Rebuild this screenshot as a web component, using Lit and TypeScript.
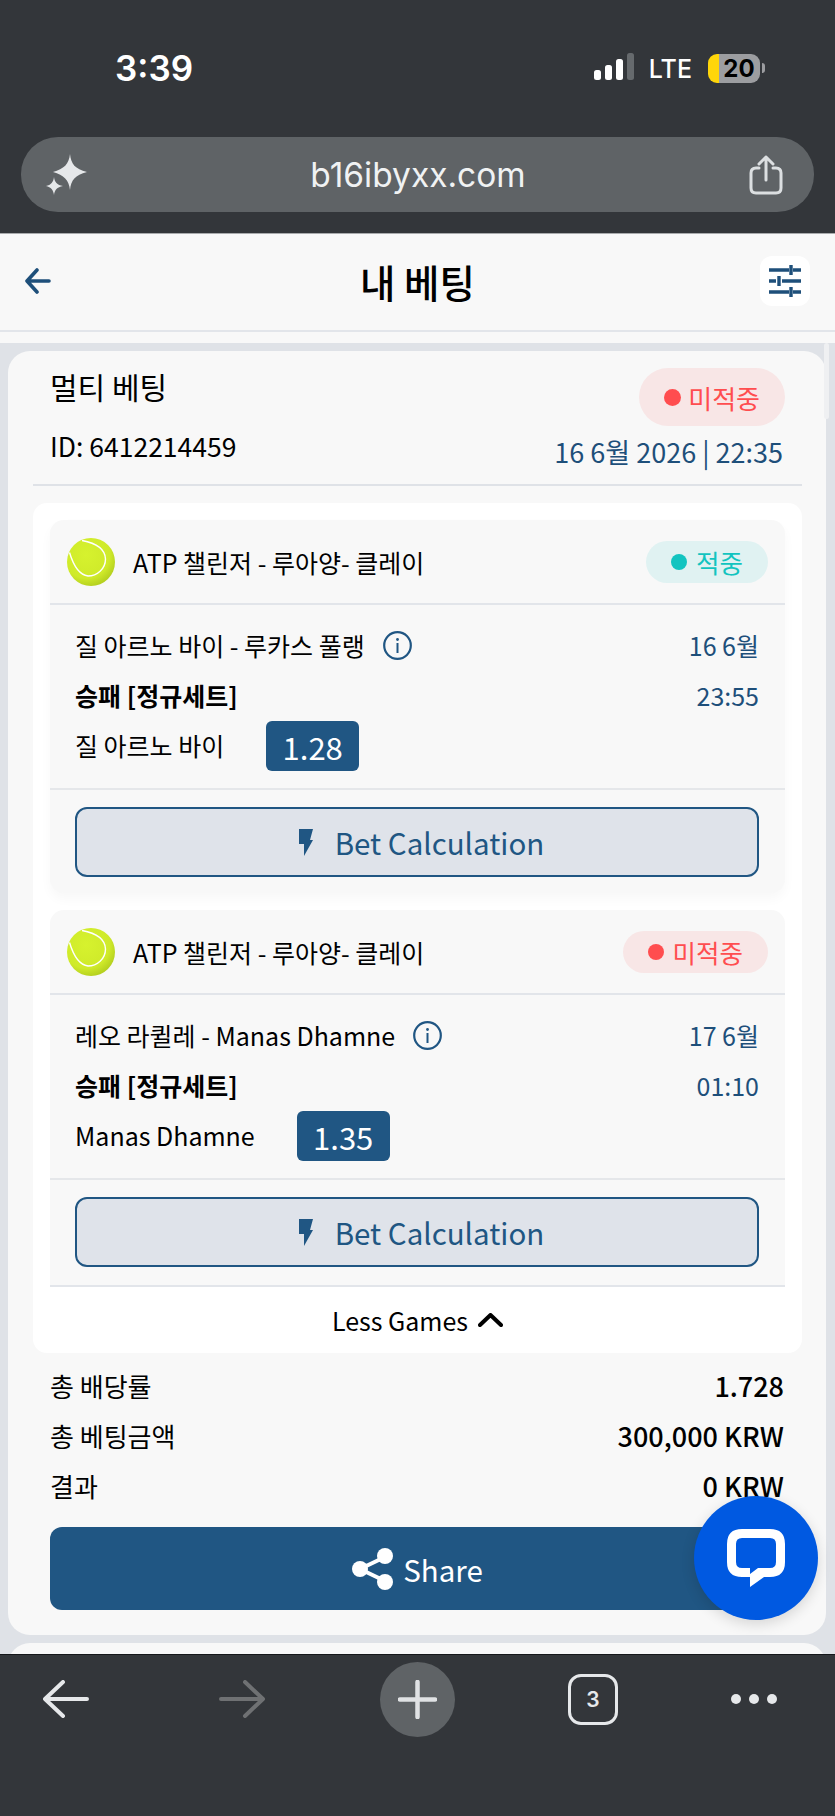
import {css, html, LitElement, svg} from "lit";
import {customElement} from "lit/decorators.js";

interface Game {
  status: string;
  won: boolean;
  match: string;
  date: string;
  time: string;
  pick: string;
  odds: string;
}

const GAMES: Game[] = [
  {
    status: "적중",
    won: true,
    match: "질 아르노 바이 - 루카스 풀랭",
    date: "16 6월",
    time: "23:55",
    pick: "질 아르노 바이",
    odds: "1.28",
  },
  {
    status: "미적중",
    won: false,
    match: "레오 라퀼레 - Manas Dhamne",
    date: "17 6월",
    time: "01:10",
    pick: "Manas Dhamne",
    odds: "1.35",
  },
];

const SUMMARY = [
  {label: "총 배당률", value: "1.728"},
  {label: "총 베팅금액", value: "300,000 KRW"},
  {label: "결과", value: "0 KRW"},
];

const tennisBall = html`
  <svg class="ball" viewBox="0 0 48 48">
    <defs>
      <radialGradient id="ballFill" cx="0.4" cy="0.35" r="0.75">
        <stop offset="0" stop-color="#d6f22e"></stop>
        <stop offset="0.65" stop-color="#cfea2a"></stop>
        <stop offset="1" stop-color="#a9c41a"></stop>
      </radialGradient>
    </defs>
    <circle cx="24" cy="24" r="24" fill="url(#ballFill)"></circle>
    ${svg`<path d="M15 2.5C23 4 38 8 38.5 21C38.5 31 30 38 21 38C12 37 6 26 2.5 14.5" fill="none" stroke="#fff" stroke-width="1.4"></path>`}
  </svg>
`;

@customElement("app-root")
export class AppRoot extends LitElement {
  static styles = css`
    :host {
      display: flex;
      flex-direction: column;
      position: relative;
      width: 835px;
      height: 1816px;
      overflow: hidden;
      font-family: "Noto Sans CJK KR", "Noto Sans", sans-serif;
      color: #000;
      background: #33363a;
    }

    /* browser chrome, top */
    .top {
      flex: none;
      height: 233px;
      background: #33363a;
      color: #fff;
      box-sizing: border-box;
      padding: 47px 21px 0;
    }

    .status {
      display: flex;
      align-items: center;
      height: 42px;
      margin-bottom: 48px;
      font-family: Inter, sans-serif;
    }

    .status svg {
      margin-bottom: 3px;
    }

    .clock {
      margin-left: 94px;
      font-size: 35px;
      font-weight: 600;
      line-height: 42px;
      flex: 1;
    }

    .lte {
      margin: 2px 16px 0 14px;
      font-size: 25px;
      font-weight: 500;
      line-height: 42px;
    }

    .battery {
      display: flex;
      align-items: center;
      justify-content: center;
      width: 52px;
      height: 29px;
      padding-left: 10px;
      box-sizing: border-box;
      border-radius: 9px;
      background: linear-gradient(90deg, #ffd60a 11px, #9c9da0 11px);
      color: #000;
      font-size: 24px;
      font-weight: 700;
    }

    .nub {
      width: 3px;
      height: 10px;
      margin: 0 49px 0 2px;
      border-radius: 0 3px 3px 0;
      background: #9c9da0;
    }

    .url {
      display: flex;
      align-items: center;
      justify-content: space-between;
      height: 75px;
      padding: 0 31px 0 25px;
      border-radius: 37px;
      background: #5f6366;
      font-family: Inter, sans-serif;
      font-size: 33.5px;
      color: #f0f2f3;
    }

    /* page header */
    .header {
      flex: none;
      display: grid;
      grid-template-columns: 1fr auto 1fr;
      align-items: center;
      height: 99px;
      padding: 0 25px 2px;
      background: #f8f8f8;
      border-top: 1px solid #a9abad;
      border-bottom: 2px solid #e2e5ea;
      box-sizing: border-box;
    }

    .title {
      font-size: 38.5px;
      font-weight: 500;
      line-height: 50px;
    }

    .filter {
      justify-self: end;
      display: flex;
      align-items: center;
      justify-content: center;
      width: 50px;
      height: 50px;
      border-radius: 12px;
      background: #fff;
    }

    .strip {
      flex: none;
      height: 11px;
      background: #f8f8f8;
    }

    /* scrolling page */
    .main {
      flex: 1;
      min-height: 0;
      overflow: hidden;
      display: flex;
      flex-direction: column;
      gap: 8px;
      padding: 8px 9px 0 8px;
      background: #dfe2e7;
    }

    .card {
      flex: none;
      padding: 17px 24px 25px 25px;
      border-radius: 22px;
      background: #f8f8f8;
    }

    .head {
      height: 116px;
      margin-bottom: 17px;
      padding: 0 19px 0 17px;
      border-bottom: 2px solid #dfe2e7;
    }

    .head-row {
      display: flex;
      justify-content: space-between;
      align-items: flex-start;
    }

    .bet-type {
      font-size: 30px;
      line-height: 36px;
    }

    .bet-id {
      font-size: 26.5px;
      line-height: 40px;
    }

    .bet-date {
      margin-top: 6px;
      font-size: 27px;
      line-height: 40px;
      color: #1e4f7a;
    }

    .badge {
      display: inline-flex;
      align-items: center;
      box-sizing: border-box;
    }

    .badge.lost {
      background: #f8e6e6;
      color: #ff4d4f;
    }

    .badge.won {
      background: #e0f2f2;
      color: #12c4c0;
    }

    .badge .dot {
      border-radius: 50%;
      background: currentColor;
    }

    .badge.big {
      height: 58px;
      margin-right: -2px;
      padding: 0 25px;
      gap: 7px;
      border-radius: 29px;
      font-size: 26px;
    }

    .badge.big .dot {
      width: 17px;
      height: 17px;
    }

    .badge.small {
      height: 42px;
      padding: 0 25px;
      gap: 9px;
      border-radius: 21px;
      font-size: 25.5px;
    }

    .badge.small .dot {
      width: 16px;
      height: 16px;
    }

    .panel {
      padding: 17px 17px 0;
      border-radius: 14px;
      background: #fff;
    }

    .games {
      display: flex;
      flex-direction: column;
      gap: 17px;
    }

    .game {
      border-radius: 14px;
      background: #f8f8f8;
      box-shadow: 0 6px 12px rgba(0, 0, 0, 0.03);
    }

    /* second game runs into the Less Games rule */
    .game:last-child {
      border-radius: 14px 14px 0 0;
      box-shadow: none;
    }

    .game:last-child .calc-wrap {
      padding-bottom: 18px;
    }

    .game-head {
      display: flex;
      align-items: center;
      gap: 18px;
      height: 83px;
      padding: 0 17px;
      border-bottom: 2px solid #e2e5ea;
    }

    .ball {
      flex: none;
      width: 48px;
      height: 48px;
    }

    .league {
      flex: 1;
      font-size: 25px;
    }

    .game-body {
      padding: 16px 26px 17px 25px;
      border-bottom: 2px solid #e5e7ea;
    }

    .line {
      display: flex;
      align-items: center;
      justify-content: space-between;
      height: 50px;
      font-size: 25px;
    }

    .line-text {
      margin-bottom: 2px;
    }

    .with-icon {
      display: flex;
      align-items: center;
      gap: 18px;
    }

    .market {
      font-weight: 700;
    }

    .when {
      color: #1e4f7a;
    }

    .pick {
      display: flex;
      align-items: center;
      gap: 42px;
    }

    .odds {
      display: flex;
      align-items: center;
      justify-content: center;
      width: 93px;
      height: 50px;
      border-radius: 6px;
      background: #205683;
      color: #fff;
      font-size: 31px;
      font-weight: 400;
    }

    .calc-wrap {
      padding: 17px 26px 16px 25px;
    }

    .calc {
      display: flex;
      align-items: center;
      justify-content: center;
      gap: 22px;
      height: 70px;
      padding-left: 8px;
      box-sizing: border-box;
      border: 2px solid #205683;
      border-radius: 12px;
      background: #dfe3ea;
      color: #205683;
      font-size: 29.5px;
    }

    .less {
      display: flex;
      align-items: center;
      justify-content: center;
      gap: 10px;
      height: 66px;
      border-top: 2px solid #e2e5ea;
      font-size: 25px;
    }

    .summary {
      margin-top: 7px;
      padding: 0 18px 0 17px;
    }

    .sum-row {
      display: flex;
      align-items: center;
      justify-content: space-between;
      height: 50px;
      font-size: 26px;
    }

    .sum-row .value {
      font-size: 27px;
      font-weight: 500;
    }

    .share {
      display: flex;
      align-items: center;
      justify-content: center;
      gap: 9px;
      height: 83px;
      margin: 17px 17px 0;
      border-radius: 12px;
      background: #205683;
      color: #fff;
      font-size: 29.5px;
    }

    .peek {
      height: 40px;
      flex: none;
      border-radius: 22px 22px 0 0;
      background: #f8f8f8;
    }

    /* browser chrome, bottom */
    .bottom {
      flex: none;
      display: flex;
      align-items: center;
      gap: 113px;
      height: 162px;
      box-sizing: border-box;
      padding: 7px 0 80px 43px;
      border-top: 1px solid #15171a;
      background: #33363a;
    }

    .bottom .back {
      margin-right: 17px;
    }

    .bottom .forward {
      margin-right: 2px;
    }

    .plus {
      display: flex;
      align-items: center;
      justify-content: center;
      width: 75px;
      height: 75px;
      border-radius: 50%;
      background: #5f6366;
    }

    .tabs {
      display: flex;
      align-items: center;
      justify-content: center;
      width: 50px;
      height: 51px;
      box-sizing: border-box;
      border: 3px solid #e6e8ea;
      border-radius: 13px;
      color: #e6e8ea;
      font-family: Inter, sans-serif;
      font-size: 21px;
      font-weight: 600;
    }

    .more {
      display: flex;
      gap: 8px;
    }

    .more span {
      width: 10px;
      height: 10px;
      border-radius: 50%;
      background: #e6e8ea;
    }

    /* overlays */
    .scrollbar {
      position: absolute;
      left: 824px;
      top: 343px;
      width: 5px;
      height: 76px;
      border-radius: 3px;
      background: #eff0f2;
    }

    .chat {
      position: absolute;
      left: 694px;
      top: 1496px;
      display: flex;
      align-items: center;
      justify-content: center;
      width: 124px;
      height: 124px;
      border-radius: 50%;
      background: #0059e1;
      box-shadow: 0 4px 14px rgba(0, 0, 0, 0.14);
    }
  `;

  private renderStatus() {
    return html`
      <div class="status">
        <div class="clock">3:39</div>
        <svg width="41" height="27" viewBox="0 0 41 27">
          <rect x="0" y="17" width="7" height="10" rx="2.5" fill="#fff"></rect>
          <rect x="11" y="12" width="7" height="15" rx="2.5" fill="#fff"></rect>
          <rect x="22" y="6" width="7" height="21" rx="2.5" fill="#fff"></rect>
          <rect x="33" y="0" width="7" height="27" rx="2.5" fill="#666a6d"></rect>
        </svg>
        <div class="lte">LTE</div>
        <div class="battery">20</div>
        <div class="nub"></div>
      </div>
    `;
  }

  private renderUrl() {
    return html`
      <div class="url">
        <svg width="41" height="41" viewBox="0 0 41 41" fill="#e6e8ea">
          <path d="M24 0C25 10 29 15 41 18C29 21 25 26 24 36C23 26 18 21 7 18C18 15 23 10 24 0Z"></path>
          <path d="M8 23C8.600 28 11 31 17 32C11 33 8.600 36 8 41C7.400 36 5 33 0 32C5 31 7.400 28 8 23Z"></path>
        </svg>
        <span>b16ibyxx.com</span>
        <svg width="34" height="40" viewBox="0 0 34 40" fill="none" stroke="#dcdfe1" stroke-width="3" stroke-linecap="round" stroke-linejoin="round">
          <path d="M10 13H7Q2 13 2 18V33Q2 38 7 38H27Q32 38 32 33V18Q32 13 27 13H24"></path>
          <path d="M17 25V2M10 9L17 2L24 9"></path>
        </svg>
      </div>
    `;
  }

  private renderHeader() {
    return html`
      <div class="header">
        <svg width="26" height="26" viewBox="0 0 26 26" fill="none" stroke="#1e4f7a" stroke-width="3.600" stroke-linecap="round" stroke-linejoin="round">
          <path d="M24 13H3M12 2L2 13L12 24"></path>
        </svg>
        <div class="title">내 베팅</div>
        <div class="filter">
          <svg width="32" height="32" viewBox="0 0 32 32" fill="none" stroke="#1e4f7a" stroke-width="3.400">
            <path d="M0 5H20M24 5H32M22 0V10"></path>
            <path d="M0 16H7M13 16H32M10 11V21"></path>
            <path d="M0 27H20M24 27H32M22 22V32"></path>
          </svg>
        </div>
      </div>
    `;
  }

  private renderGame(game: Game) {
    return html`
      <div class="game">
        <div class="game-head">
          ${tennisBall}
          <div class="league">ATP 챌린저 - 루아양- 클레이</div>
          <div class="badge small ${game.won ? "won" : "lost"}">
            <span class="dot"></span>${game.status}
          </div>
        </div>
        <div class="game-body">
          <div class="line">
            <div class="with-icon line-text">
              ${game.match}
              <svg width="29" height="29" viewBox="0 0 29 29">
                <circle cx="14.500" cy="14.500" r="13.300" fill="none" stroke="#205683" stroke-width="2.200"></circle>
                <rect x="13.500" y="12" width="2" height="10" fill="#205683"></rect>
                <circle cx="14.500" cy="8.500" r="1.400" fill="#205683"></circle>
              </svg>
            </div>
            <div class="when line-text">${game.date}</div>
          </div>
          <div class="line">
            <div class="market line-text">승패 [정규세트]</div>
            <div class="when line-text">${game.time}</div>
          </div>
          <div class="line">
            <div class="pick">
              <span class="line-text">${game.pick}</span>
              <div class="odds">${game.odds}</div>
            </div>
          </div>
        </div>
        <div class="calc-wrap">
          <div class="calc">
            <svg width="15" height="27" viewBox="0 0 15 27" fill="#205683">
              <path d="M1 0H15L12 11H15L6 27V15H1Z"></path>
            </svg>
            Bet Calculation
          </div>
        </div>
      </div>
    `;
  }

  private renderBottom() {
    return html`
      <div class="bottom">
        <svg class="back" width="46" height="38" viewBox="0 0 46 38" fill="none" stroke="#e6e8ea" stroke-width="4" stroke-linecap="round" stroke-linejoin="round">
          <path d="M44 19H3M20 2L2 19L20 36"></path>
        </svg>
        <svg class="forward" width="46" height="38" viewBox="0 0 46 38" fill="none" stroke="#6f7173" stroke-width="4" stroke-linecap="round" stroke-linejoin="round">
          <path d="M2 19H43M26 2L44 19L26 36"></path>
        </svg>
        <div class="plus">
          <svg width="39" height="39" viewBox="0 0 39 39" stroke="#e0e2e4" stroke-width="4.500" stroke-linecap="round">
            <path d="M19.500 2V37M2 19.500H37"></path>
          </svg>
        </div>
        <div class="tabs">3</div>
        <div class="more"><span></span><span></span><span></span></div>
      </div>
    `;
  }

  render() {
    return html`
      <div class="top">${this.renderStatus()} ${this.renderUrl()}</div>
      ${this.renderHeader()}
      <div class="strip"></div>
      <div class="main">
        <div class="card">
          <div class="head">
            <div class="head-row">
              <div class="bet-type">멀티 베팅</div>
              <div class="badge big lost"><span class="dot"></span>미적중</div>
            </div>
            <div class="head-row">
              <div class="bet-id">ID: 6412214459</div>
              <div class="bet-date">16 6월 2026 | 22:35</div>
            </div>
          </div>
          <div class="panel">
            <div class="games">${GAMES.map((g) => this.renderGame(g))}</div>
            <div class="less">
              Less Games
              <svg width="25" height="14" viewBox="0 0 25 14" fill="none" stroke="#000" stroke-width="4" stroke-linecap="round" stroke-linejoin="round">
                <path d="M2 12L12.500 2L23 12"></path>
              </svg>
            </div>
          </div>
          <div class="summary">
            ${SUMMARY.map(
              (row) => html`
                <div class="sum-row">
                  <div>${row.label}</div>
                  <div class="value">${row.value}</div>
                </div>
              `
            )}
          </div>
          <div class="share">
            <svg width="42" height="42" viewBox="0 0 42 42" fill="#fff" stroke="#fff">
              <path d="M33 9L8 21L33 33" fill="none" stroke-width="4"></path>
              <circle cx="33" cy="8" r="8" stroke="none"></circle>
              <circle cx="8" cy="21" r="8" stroke="none"></circle>
              <circle cx="33" cy="34" r="8" stroke="none"></circle>
            </svg>
            Share
          </div>
        </div>
        <div class="peek"></div>
      </div>
      ${this.renderBottom()}
      <div class="scrollbar"></div>
      <div class="chat">
        <svg width="58" height="58" viewBox="0 0 58 58" fill="#fff" fill-rule="evenodd">
          <path d="M15 0H43Q58 0 58 15V33Q58 48 43 48H37L23 58V48H15Q0 48 0 33V15Q0 0 15 0ZM15 9Q9 9 9 15V33Q9 39 15 39H23V45L31 39H43Q49 39 49 33V15Q49 9 43 9Z"></path>
        </svg>
      </div>
    `;
  }
}

declare global {
  interface HTMLElementTagNameMap {
    "app-root": AppRoot;
  }
}
